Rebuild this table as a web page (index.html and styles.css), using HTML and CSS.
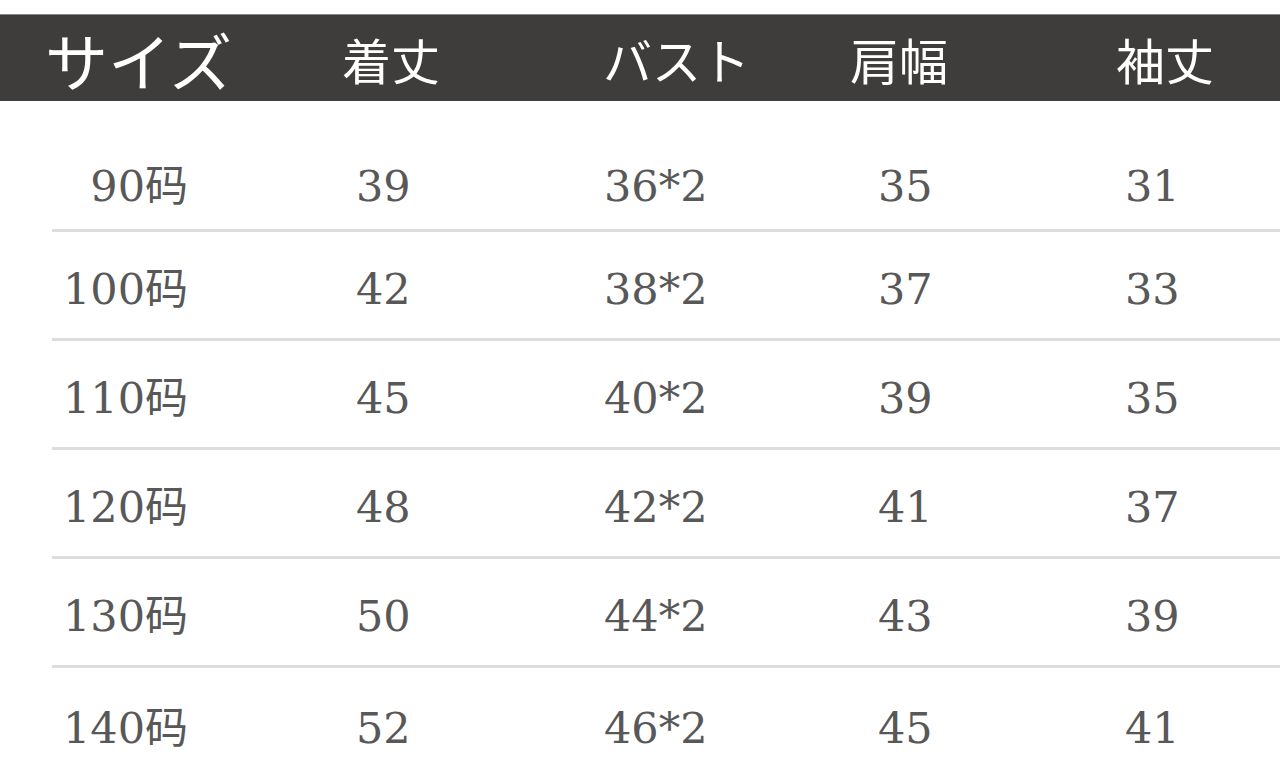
FILE: index.html
```html
<!DOCTYPE html>
<html lang="ja">
<head>
<meta charset="utf-8">
<link rel="stylesheet" href="styles.css">
</head>
<body>
<div class="sheet">
  <div class="head">
    <div class="h h1">サイズ</div>
    <div class="h">着丈</div>
    <div class="h">バスト</div>
    <div class="h">肩幅</div>
    <div class="h">袖丈</div>
  </div>
  <div class="rows">
    <div class="row first"><div class="c c1">90码</div><div class="c">39</div><div class="c">36*2</div><div class="c">35</div><div class="c">31</div></div>
    <div class="row"><div class="c c1">100码</div><div class="c">42</div><div class="c">38*2</div><div class="c">37</div><div class="c">33</div></div>
    <div class="row"><div class="c c1">110码</div><div class="c">45</div><div class="c">40*2</div><div class="c">39</div><div class="c">35</div></div>
    <div class="row"><div class="c c1">120码</div><div class="c">48</div><div class="c">42*2</div><div class="c">41</div><div class="c">37</div></div>
    <div class="row"><div class="c c1">130码</div><div class="c">50</div><div class="c">44*2</div><div class="c">43</div><div class="c">39</div></div>
    <div class="row last"><div class="c c1">140码</div><div class="c">52</div><div class="c">46*2</div><div class="c">45</div><div class="c">41</div></div>
  </div>
</div>
</body>
</html>
```

FILE: styles.css
```css
html, body {
  margin: 0;
  padding: 0;
  background: #ffffff;
}
.sheet {
  width: 1280px;
  height: 773px;
  overflow: hidden;
  padding-top: 14px;
  box-sizing: border-box;
}
.head {
  height: 87px;
  background: #3f3d3b;
  border-top: 1px solid #8a8886;
  box-sizing: border-box;
  display: grid;
  grid-template-columns: 297px 261px 247px 266px 1fr;
  align-items: center;
  padding-left: 45px;
  font-family: "Noto Sans CJK JP", sans-serif;
  color: #ffffff;
}
.h {
  font-size: 49px;
  line-height: 1;
}
.h1 {
  font-size: 63px;
}
.rows {
  margin-left: 52px;
}
.row {
  display: grid;
  grid-template-columns: 304px 248px 274px 247px 1fr;
  align-items: center;
  height: 109px;
  padding-top: 9px;
  box-sizing: border-box;
  border-bottom: 3px solid #dddddd;
  font-family: "DejaVu Serif", serif;
  font-size: 43px;
  color: #585858;
}
.row.first {
  height: 131px;
  padding-top: 42px;
}
.row.last {
  border-bottom: none;
  padding-top: 12px;
}
.c {
  line-height: 1;
  font-family: "DejaVu Serif", "Noto Sans CJK SC", serif;
}
.c1 {
  text-align: right;
  padding-right: 168px;
}
```
